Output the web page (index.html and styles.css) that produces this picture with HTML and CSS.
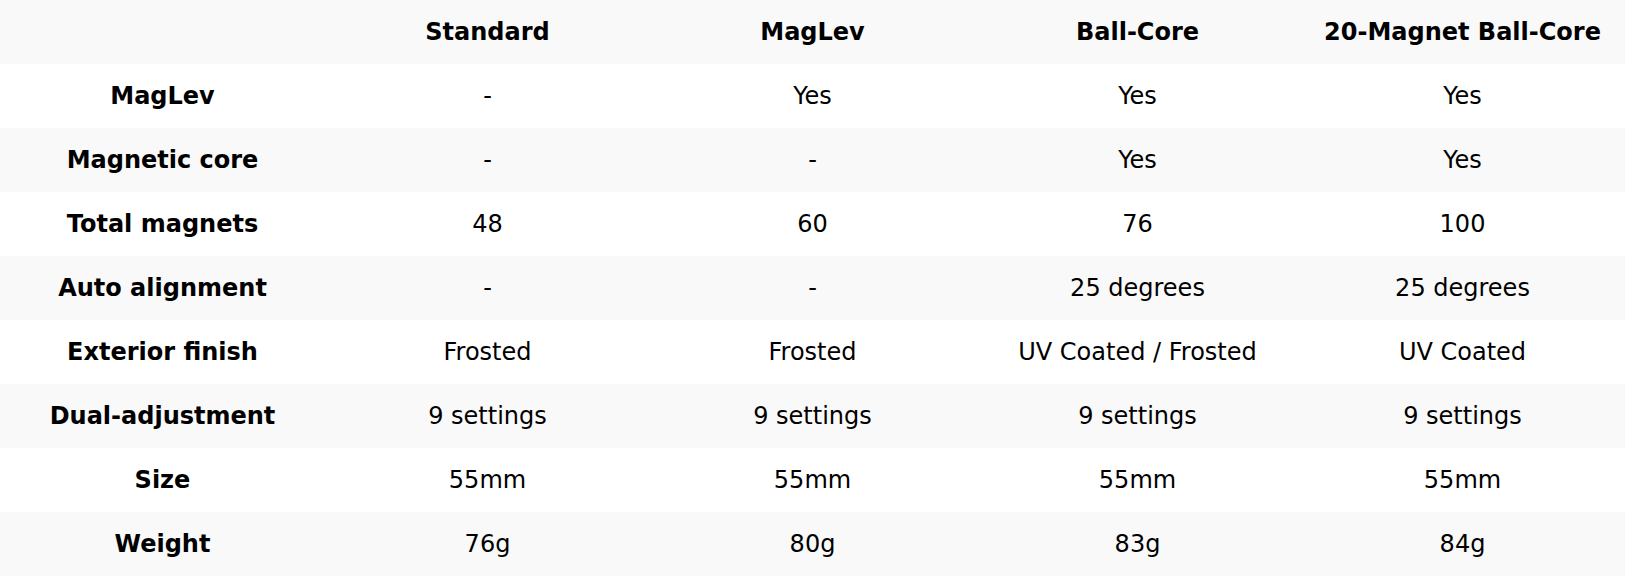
FILE: index.html
```html
<!DOCTYPE html>
<html>
<head>
<meta charset="utf-8">
<link rel="stylesheet" href="styles.css">
</head>
<body>
<table class="spec">
  <thead>
    <tr><th></th><th>Standard</th><th>MagLev</th><th>Ball-Core</th><th>20-Magnet Ball-Core</th></tr>
  </thead>
  <tbody>
    <tr><th>MagLev</th><td>-</td><td>Yes</td><td>Yes</td><td>Yes</td></tr>
    <tr><th>Magnetic core</th><td>-</td><td>-</td><td>Yes</td><td>Yes</td></tr>
    <tr><th>Total magnets</th><td>48</td><td>60</td><td>76</td><td>100</td></tr>
    <tr><th>Auto alignment</th><td>-</td><td>-</td><td>25 degrees</td><td>25 degrees</td></tr>
    <tr><th>Exterior finish</th><td>Frosted</td><td>Frosted</td><td>UV Coated / Frosted</td><td>UV Coated</td></tr>
    <tr><th>Dual-adjustment</th><td>9 settings</td><td>9 settings</td><td>9 settings</td><td>9 settings</td></tr>
    <tr><th>Size</th><td>55mm</td><td>55mm</td><td>55mm</td><td>55mm</td></tr>
    <tr><th>Weight</th><td>76g</td><td>80g</td><td>83g</td><td>84g</td></tr>
  </tbody>
</table>
</body>
</html>
```
FILE: styles.css
```css
html, body {
  margin: 0;
  padding: 0;
  background: #ffffff;
}
.spec {
  width: 100%;
  border-collapse: collapse;
  table-layout: fixed;
  font-family: "DejaVu Sans", sans-serif;
  font-size: 24px;
  color: #000;
}
.spec th, .spec td {
  height: 64px;
  padding: 0;
  text-align: center;
  vertical-align: middle;
}
.spec th {
  font-weight: bold;
}
.spec td {
  font-weight: normal;
}
.spec thead tr,
.spec tbody tr:nth-child(even) {
  background: #f9f9f9;
}
```
